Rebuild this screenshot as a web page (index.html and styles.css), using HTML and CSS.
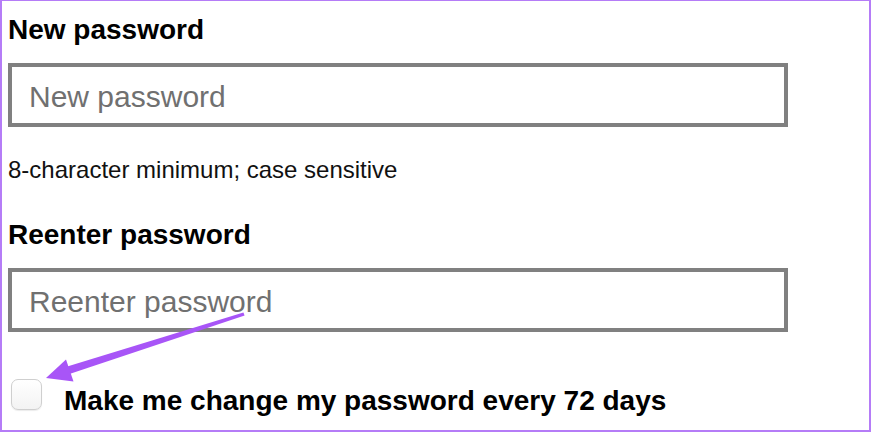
FILE: index.html
```html
<!DOCTYPE html>
<html lang="en">
<head>
    <meta charset="UTF-8">
    <meta name="viewport" content="width=device-width, initial-scale=1.0">
    <title>Change password</title>
    <link rel="stylesheet" href="styles.css">
</head>
<body>
    <div class="frame">
        <label class="field-label label-first" for="newPassword">New password</label>
        <input class="password-input input-first" type="password" id="newPassword" placeholder="New password">

        <p class="hint">8-character minimum; case sensitive</p>

        <label class="field-label label-second" for="reenterPassword">Reenter password</label>
        <input class="password-input input-second" type="password" id="reenterPassword" placeholder="Reenter password">

        <div class="check-row">
            <input class="check-box" type="checkbox" id="expire">
            <label class="check-label" for="expire">Make me change my password every 72 days</label>
        </div>

        <!-- annotation arrow drawn over the form -->
        <svg class="annotation" width="871" height="432" viewBox="0 0 871 432">
            <polygon points="243.4,312.6 244.6,315.4 67.2,374.8 64.8,367.2" fill="#a855f7"/>
            <polygon points="46,378 66,359.5 73.5,381.5" fill="#a855f7"/>
        </svg>
    </div>
</body>
</html>
```

FILE: styles.css
```css
html, body {
    margin: 0;
    padding: 0;
    background: #fff;
}
body {
    font-family: "Liberation Sans", Arial, sans-serif;
    color: #000;
}
.frame {
    position: relative;
    box-sizing: border-box;
    width: 871px;
    height: 432px;
    border-style: solid;
    border-color: #b57cf7;
    border-width: 1px 2px 2px 2px;
    padding: 13px 6px 0 6px;
    display: flex;
    flex-direction: column;
    align-items: flex-start;
    overflow: hidden;
}
.field-label {
    display: block;
    font-size: 28px;
    font-weight: bold;
    line-height: 32px;
}
.label-second {
    margin-top: 35px;
}
.password-input {
    box-sizing: border-box;
    width: 780px;
    height: 64px;
    border: 4px solid #808080;
    border-radius: 0;
    padding: 3px 10px 0 17px;
    font-family: "Liberation Sans", Arial, sans-serif;
    font-size: 30px;
    color: #000;
    background: #fff;
    outline: none;
}
.password-input::placeholder {
    color: #707070;
}
.input-first {
    margin-top: 17px;
}
.input-second {
    margin-top: 17px;
}
.hint {
    margin: 29px 0 0 0;
    font-size: 24px;
    line-height: 28px;
    color: #111;
}
.check-row {
    display: flex;
    align-items: flex-start;
    margin-top: 47px;
}
.check-box {
    appearance: none;
    -webkit-appearance: none;
    box-sizing: border-box;
    width: 31px;
    height: 31px;
    margin: 0 0 0 3px;
    border: 1px solid #cfcfcf;
    border-radius: 7px;
    background: linear-gradient(#ffffff, #f3f3f3);
    box-shadow: 0 1px 1px rgba(0, 0, 0, 0.08);
}
.check-label {
    margin: 6px 0 0 22px;
    font-size: 28px;
    font-weight: bold;
    line-height: 32px;
}
.annotation {
    position: absolute;
    left: -2px;
    top: -1px;
    pointer-events: none;
}
```
